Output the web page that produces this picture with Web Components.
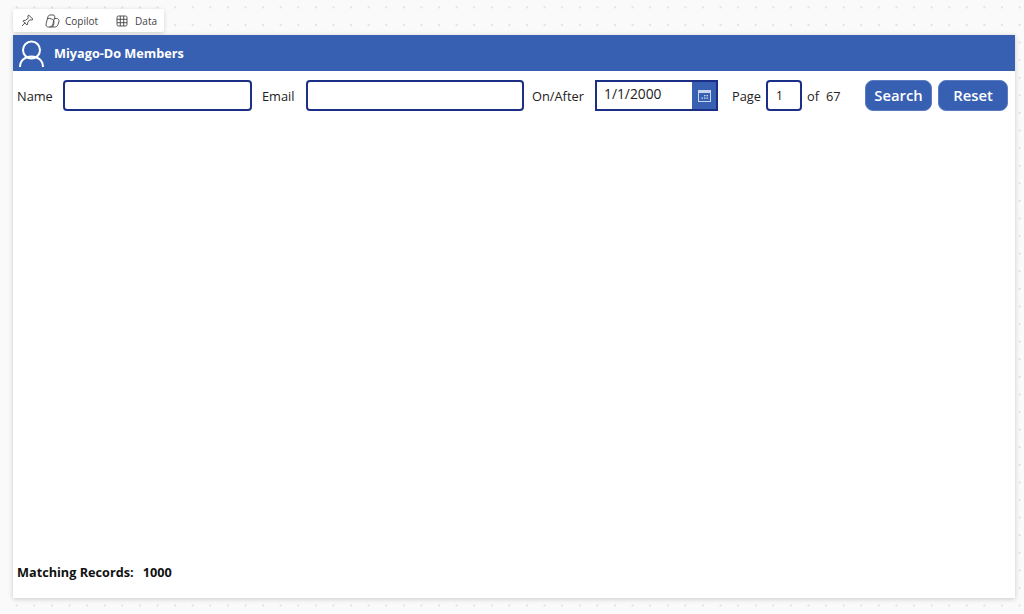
<!DOCTYPE html>
<html>
<head>
<meta charset="utf-8">
<title>Miyago-Do Members</title>
<style>
  html, body { margin: 0; height: 100%; }
  body {
    width: 1024px; height: 614px; overflow: hidden;
    font-family: "Open Sans", "Liberation Sans", sans-serif;
    background-color: #fafafa;
    background-image: radial-gradient(circle at 1px 1px, #e3e3e3 1px, transparent 1.2px);
    background-size: 17.6px 17.6px;
    background-position: 15.8px 6.4px;
  }
</style>
</head>
<body>
<studio-shell>
  <studio-toolbar slot="toolbar"></studio-toolbar>
  <app-screen slot="screen" title-text="Miyago-Do Members">
    <search-bar></search-bar>
    <record-count slot="footer" label="Matching Records:" value="1000"></record-count>
  </app-screen>
</studio-shell>

<script>
class StudioShell extends HTMLElement {
  constructor() {
    super();
    this.attachShadow({mode: 'open'});
    this.shadowRoot.innerHTML = `
    <style>
      :host { display: flex; flex-direction: column; padding: 9px 9px 16px 13px; height: 614px; box-sizing: border-box; }
      .bar { flex: none; height: 26px; }
      .main { flex: 1; display: flex; min-height: 0; }
    </style>
    <div class="bar"><slot name="toolbar"></slot></div>
    <div class="main"><slot name="screen"></slot></div>`;
  }
}

class StudioToolbar extends HTMLElement {
  constructor() {
    super();
    this.attachShadow({mode: 'open'});
    this.shadowRoot.innerHTML = `
    <style>
      :host {
        display: flex; align-items: center; width: 151px; height: 23px; box-sizing: border-box;
        background: #fff; border-radius: 2px; box-shadow: 0 1px 4px rgba(0,0,0,.16);
        font: 10px "Open Sans", "Liberation Sans", sans-serif; color: #444;
      }
      svg { display: block; flex: none; fill: none; stroke: #444; stroke-width: .9; }
      .pin { margin-left: 8px; }
      .copilot { margin-left: 11px; }
      .t1 { margin-left: 5px; }
      .grid { margin-left: 18px; }
      .t2 { margin-left: 7px; }
    </style>
    <svg class="pin" width="13" height="13" viewBox="0 0 13 13"><path d="M1 12l3.300-3.500M7.600 1L12 5.300 10.800 6 8.800 5.800 6.500 8.700 6.700 10.200 5.900 11 2 7.100l.8-.8 1.500.2L7.200 4.200 6.900 2.200z"/></svg>
    <svg class="copilot" width="15" height="14" viewBox="0 0 15 14"><path d="M5 1h3c1.500 0 2 1 1.700 2.200L8 9.500C7.600 11.500 6.400 13 4.500 13h-1C1.500 13 .6 11.500 1.100 9.700L2.900 3C3.200 1.800 4 1 5 1z"/><path d="M9.300 4.500h2.200c1.900 0 2.900 1.500 2.400 3.300L13 10.500C12.500 12 11.300 13 9.500 13h-5"/><path d="M2.500 4.500C5 4 7.500 5 8.500 6.500 9.300 8 9 11 7.500 13"/></svg>
    <span class="t1">Copilot</span>
    <svg class="grid" width="12" height="12" viewBox="0 0 12 12"><rect x="1" y="1" width="10" height="10" rx="1.500"/><path d="M1 4.300h10M1 7.700h10M4.300 1v10M7.700 1v10"/></svg>
    <span class="t2">Data</span>`;
  }
}

class AppScreen extends HTMLElement {
  constructor() {
    super();
    this.attachShadow({mode: 'open'});
    this.shadowRoot.innerHTML = `
    <style>
      :host {
        display: flex; flex-direction: column; flex: 1;
        background: #fff; box-shadow: 0 1px 5px rgba(0,0,0,.2);
      }
      header {
        flex: none; height: 36px; display: flex; align-items: center; background: #3860b2; color: #fff;
        font: 700 12.700px "Open Sans", "Liberation Sans", sans-serif;
      }
      header svg { display: block; margin: 0 7px 0 4px; fill: none; stroke: #fff; stroke-width: 2; }
      .body { flex: 1; padding-top: 9px; }
      .foot { flex: none; height: 35px; }
    </style>
    <header>
      <svg width="30" height="30" viewBox="0 0 30 30"><circle cx="14.500" cy="12" r="8.500"/><path d="M3 29c0-6.500 5-10.500 11.500-10.500S26 22.500 26 29"/></svg>
      <span id="title"></span>
    </header>
    <div class="body"><slot></slot></div>
    <div class="foot"><slot name="footer"></slot></div>`;
  }
  connectedCallback() {
    this.shadowRoot.querySelector('#title').textContent = this.getAttribute('title-text');
  }
}

class TextBox extends HTMLElement {
  constructor() {
    super();
    this.attachShadow({mode: 'open'});
    this.shadowRoot.innerHTML = `
    <style>
      :host {
        display: flex; align-items: center; height: 31px; box-sizing: border-box;
        border: 2px solid #1b2f86; border-radius: 4px; background: #fff; padding-left: 8px;
        font-size: 12px; color: #111;
      }
    </style>
    <slot></slot>`;
  }
}

class DatePicker extends HTMLElement {
  constructor() {
    super();
    this.attachShadow({mode: 'open'});
    this.shadowRoot.innerHTML = `
    <style>
      :host {
        display: flex; height: 31px; box-sizing: border-box;
        border: 2px solid #1b2f86; background: #fff; font-size: 13.800px; color: #222;
      }
      .val { flex: 1; padding: 0 0 5px 7px; display: flex; align-items: center; }
      .btn { flex: none; width: 24px; padding-left: 1px; box-sizing: border-box; background: #3860b2; display: flex; align-items: center; justify-content: center; }
      svg { display: block; fill: none; stroke: #c9d5ec; }
      .d { fill: #c9d5ec; stroke: none; }
    </style>
    <div class="val"><slot></slot></div>
    <div class="btn">
      <svg width="15" height="14" viewBox="0 0 15 14"><rect x="1.500" y="1.500" width="12" height="11"/><rect class="d" x="1.500" y="1.500" width="12" height="2.500"/><rect class="d" x="7" y="6" width="1.500" height="1.300"/><rect class="d" x="9.500" y="6" width="1.500" height="1.300"/><rect class="d" x="4.500" y="8.500" width="1.500" height="1.300"/><rect class="d" x="7" y="8.500" width="1.500" height="1.300"/><rect class="d" x="9.500" y="8.500" width="1.500" height="1.300"/></svg>
    </div>`;
  }
}

class ActionButton extends HTMLElement {
  constructor() {
    super();
    this.attachShadow({mode: 'open'});
    this.shadowRoot.innerHTML = `
    <style>
      :host {
        display: flex; align-items: center; justify-content: center; height: 31px; box-sizing: border-box;
        background: #3860b2; border: 1px solid #5b7cc0; border-radius: 8px; color: #fff; padding-bottom: 1px;
        font-size: 14.800px; font-weight: 600;
      }
    </style>
    <slot></slot>`;
  }
}

class SearchBar extends HTMLElement {
  constructor() {
    super();
    this.attachShadow({mode: 'open'});
    this.shadowRoot.innerHTML = `
    <style>
      :host {
        display: flex; align-items: center; padding-left: 4px; height: 31px;
        font: 12.800px "Open Sans", "Liberation Sans", sans-serif; color: #222;
      }
      .l1 { width: 46px; }
      .name { width: 189px; margin-right: 10px; }
      .l2 { width: 44px; }
      .email { width: 218px; margin-right: 8px; }
      .l3 { width: 63px; }
      .date { width: 123px; margin-right: 14px; }
      .l4 { width: 34px; }
      .page { width: 36px; margin-right: 5px; }
      .of { width: 19px; }
      .count { width: 39px; }
      .search { width: 67px; margin-right: 6px; }
      .reset { width: 70px; }
    </style>
    <span class="l1">Name</span>
    <text-box class="name"></text-box>
    <span class="l2">Email</span>
    <text-box class="email"></text-box>
    <span class="l3">On/After</span>
    <date-picker class="date">1/1/2000</date-picker>
    <span class="l4">Page</span>
    <text-box class="page">1</text-box>
    <span class="of">of</span>
    <span class="count">67</span>
    <action-button class="search">Search</action-button>
    <action-button class="reset">Reset</action-button>`;
  }
}

class RecordCount extends HTMLElement {
  constructor() {
    super();
    this.attachShadow({mode: 'open'});
    this.shadowRoot.innerHTML = `
    <style>
      :host {
        display: flex; gap: 9px; padding: 0 0 0 4px;
        font: 700 12.700px "Open Sans", "Liberation Sans", sans-serif; color: #111;
      }
    </style>
    <span id="l"></span><span id="v"></span>`;
  }
  connectedCallback() {
    this.shadowRoot.querySelector('#l').textContent = this.getAttribute('label');
    this.shadowRoot.querySelector('#v').textContent = this.getAttribute('value');
  }
}

customElements.define('studio-shell', StudioShell);
customElements.define('studio-toolbar', StudioToolbar);
customElements.define('app-screen', AppScreen);
customElements.define('text-box', TextBox);
customElements.define('date-picker', DatePicker);
customElements.define('action-button', ActionButton);
customElements.define('search-bar', SearchBar);
customElements.define('record-count', RecordCount);
</script>
</body>
</html>
